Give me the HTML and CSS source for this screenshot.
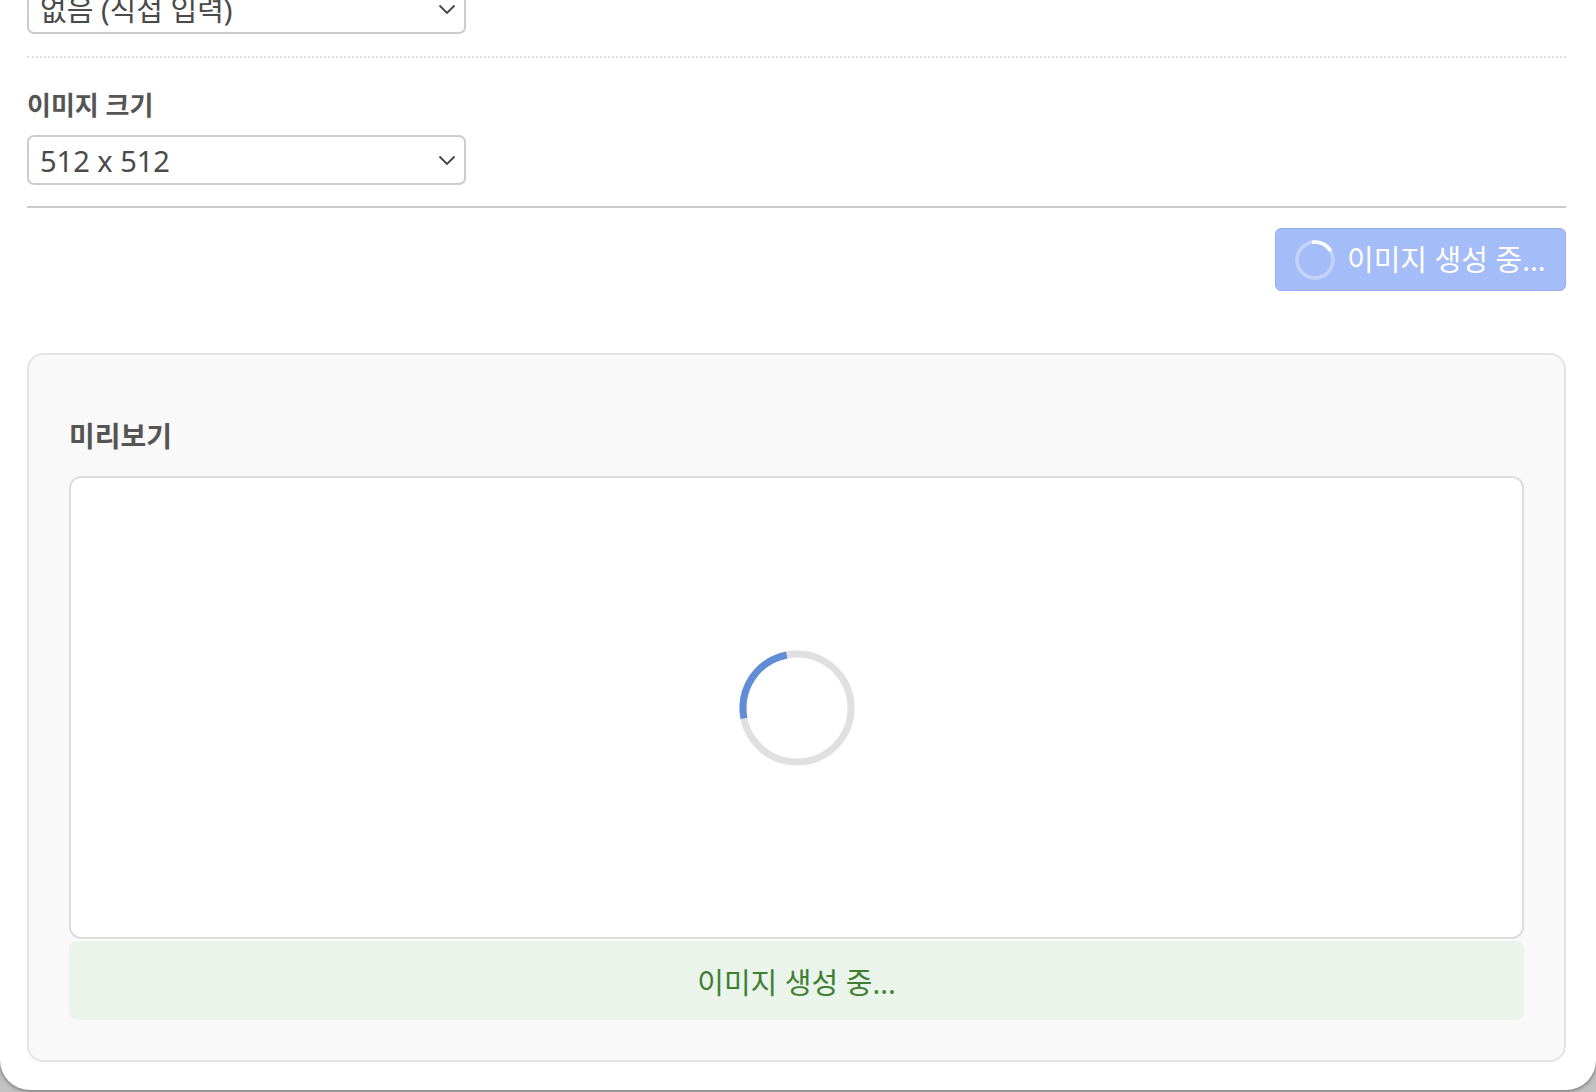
FILE: index.html
```html
<!DOCTYPE html>
<html lang="ko">
<head>
<meta charset="utf-8">
<title>이미지 생성</title>
<link rel="stylesheet" href="styles.css">
</head>
<body>
<div class="page">
  <div class="select select-top">
    <span class="select-text">없음 (직접 입력)</span>
    <svg class="chevron" width="18" height="11" viewBox="0 0 18 11"><path d="M1.5 1.5 L9 9 L16.5 1.5" fill="none" stroke="#444" stroke-width="1.8"/></svg>
  </div>
  <div class="divider-dotted"></div>
  <div class="field">
    <div class="field-label">이미지 크기</div>
    <div class="select">
      <span class="select-text">512 x 512</span>
      <svg class="chevron" width="18" height="11" viewBox="0 0 18 11"><path d="M1.5 1.5 L9 9 L16.5 1.5" fill="none" stroke="#444" stroke-width="1.8"/></svg>
    </div>
  </div>
  <div class="divider-solid"></div>
  <div class="actions">
    <button class="btn-generate" disabled>
      <svg class="btn-spinner" width="40" height="40" viewBox="0 0 40 40">
        <circle cx="20" cy="20" r="18" fill="none" stroke="rgba(255,255,255,0.35)" stroke-width="3.5"/>
        <path d="M16.87 2.27 A18 18 0 0 1 35.59 11" fill="none" stroke="#ffffff" stroke-width="3.5"/>
      </svg>
      <span>이미지 생성 중...</span>
    </button>
  </div>
  <section class="card">
    <h3 class="card-title">미리보기</h3>
    <div class="preview">
      <svg class="spinner" width="116" height="116" viewBox="0 0 116 116">
        <circle cx="58" cy="58" r="54" fill="none" stroke="#e0e0e0" stroke-width="7"/>
        <path d="M5 68.3 A54 54 0 0 1 47.7 5" fill="none" stroke="#608dd8" stroke-width="7"/>
      </svg>
    </div>
    <div class="status">이미지 생성 중...</div>
  </section>
</div>
</body>
</html>
```

FILE: styles.css
```css
html, body {
  margin: 0;
  padding: 0;
}
body {
  background: #c2c2c2;
  width: 1596px;
  height: 1092px;
  overflow: hidden;
  font-family: "Noto Sans", "Noto Sans CJK KR", sans-serif;
}
.page {
  box-sizing: border-box;
  width: 1596px;
  height: 1090px;
  background: #ffffff;
  border-radius: 0 0 30px 30px;
  box-shadow: 0 1px 4px rgba(0, 0, 0, 0.45);
  padding: 0 30px 0 27px;
  overflow: hidden;
}
.select {
  box-sizing: border-box;
  width: 439px;
  height: 50px;
  border: 2px solid #cccccc;
  border-radius: 7px;
  background: #ffffff;
  display: flex;
  align-items: center;
  justify-content: space-between;
  padding: 0 8px 0 11px;
}
.select-top {
  margin-top: -16px;
}
.select-text {
  font-size: 29px;
  color: #4a4a4a;
  line-height: 1;
}
.chevron {
  display: block;
}
.divider-dotted {
  margin-top: 22px;
  border-top: 2px dotted #dcdcdc;
}
.field {
  padding-top: 29px;
}
.field-label {
  font-size: 26px;
  font-weight: 700;
  color: #555555;
  line-height: 36px;
  margin-bottom: 12px;
}
.divider-solid {
  margin-top: 21px;
  border-top: 2px solid #cccccc;
}
.actions {
  margin-top: 20px;
  display: flex;
  justify-content: flex-end;
}
.btn-generate {
  box-sizing: border-box;
  height: 63px;
  width: 291px;
  display: flex;
  align-items: center;
  gap: 12px;
  padding: 0 19px;
  background: #a4bcf8;
  border: 1px solid #95aef0;
  border-radius: 6px;
  color: #ffffff;
  font-family: inherit;
  font-size: 29px;
  line-height: 1;
  white-space: nowrap;
}
.btn-spinner {
  display: block;
  flex: none;
}
.card {
  margin-top: 62px;
  background: #f9f9f9;
  border: 2px solid #e4e4e4;
  border-radius: 16px;
  padding: 61px 40px 40px 40px;
}
.card-title {
  margin: 0 0 20px 0;
  font-size: 28px;
  font-weight: 700;
  color: #555555;
  line-height: 40px;
}
.preview {
  box-sizing: border-box;
  height: 463px;
  background: #ffffff;
  border: 2px solid #dddddd;
  border-radius: 12px;
  display: flex;
  align-items: center;
  justify-content: center;
}
.spinner {
  display: block;
}
.status {
  margin-top: 2px;
  height: 79px;
  background: #eaf4ea;
  border-radius: 8px;
  display: flex;
  align-items: center;
  justify-content: center;
  color: #3f7f34;
  font-size: 29px;
}
```
